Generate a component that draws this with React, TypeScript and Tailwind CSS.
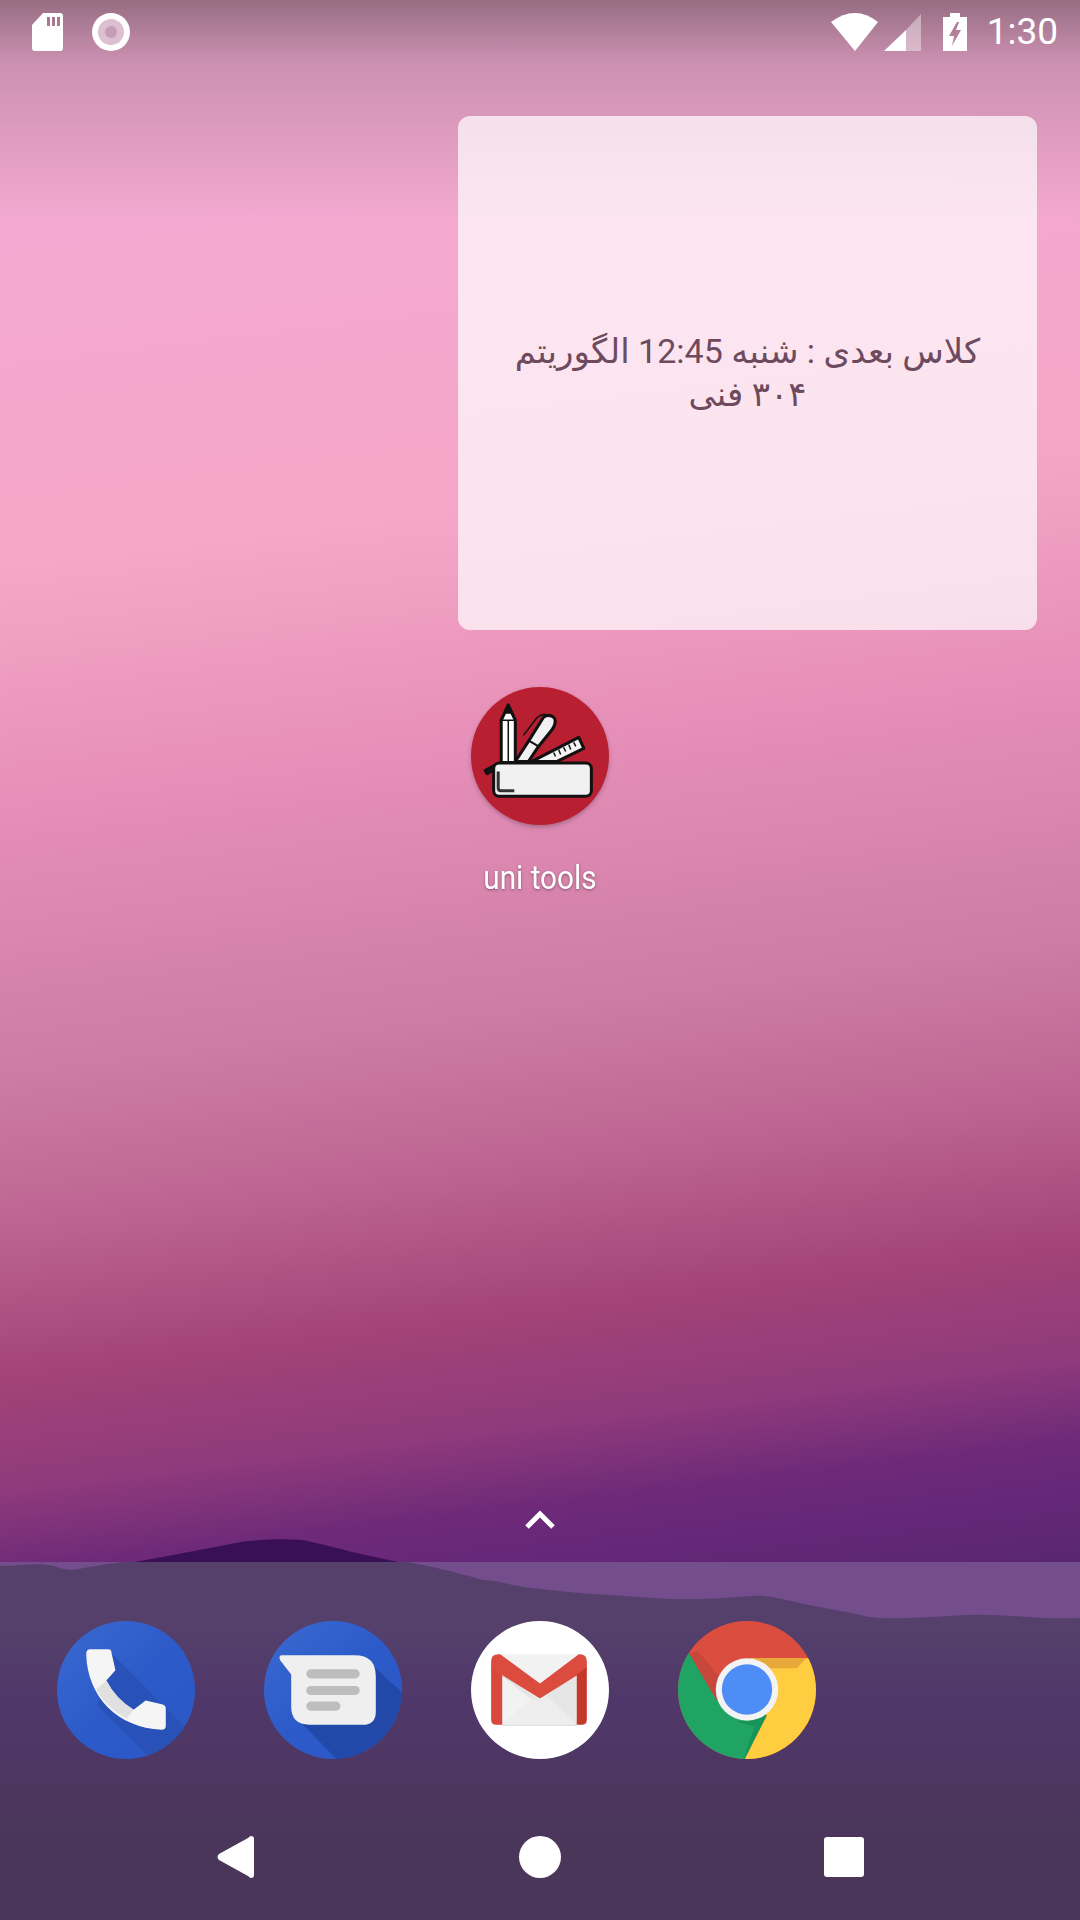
import React from "react";

function StatusLeft() {
  return (
    <div className="flex items-center gap-[29px]">
      <svg width="31" height="38" viewBox="0 0 31 38">
        <path fillRule="evenodd" fill="#fff" d="M11 0H28Q31 0 31 3V35Q31 38 28 38H3Q0 38 0 35V12ZM15 4V13H18V4ZM20 4V13H23V4ZM25 4V13H28V4Z" />
      </svg>
      <svg width="38" height="38" viewBox="0 0 38 38">
        <circle cx="19" cy="19" r="19" fill="#fff" />
        <circle cx="19" cy="19" r="13" fill="#dcbfd0" />
        <circle cx="19" cy="19" r="6" fill="#c79cb6" />
      </svg>
    </div>
  );
}

function StatusRight() {
  return (
    <div className="flex items-center">
      <svg width="48" height="38" viewBox="0 0 48 38" className="mr-[5px]">
        <path fill="#fff" d="M0 9Q24 -9 47 9L24 38Z" />
      </svg>
      <svg width="37" height="38" viewBox="0 0 37 38" className="mr-[22px]">
        <path fill="#fff" fillOpacity="0.4" d="M37 1V38H22V17Z" />
        <path fill="#fff" d="M22 17V38H0Z" />
      </svg>
      <svg width="24" height="38" viewBox="0 0 24 38" className="mr-[20px]">
        <path fillRule="evenodd" fill="#fff" d="M7 0H17V4H24V38H0V4H7ZM14 9L6 23H11L9 33L18 17H13L16 9Z" />
      </svg>
      <span className="text-[37px] leading-none text-white font-['Roboto',sans-serif]">1:30</span>
    </div>
  );
}

function PhoneIcon() {
  return (
    <svg width="138" height="138" viewBox="0 0 137 137">
      <defs>
        <clipPath id="pc"><circle cx="68.5" cy="68.5" r="68.5" /></clipPath>
        <linearGradient id="pg" x1="0" y1="0" x2="1" y2="1">
          <stop offset="0" stopColor="#3c69d0" />
          <stop offset="0.5" stopColor="#2c5bc9" />
          <stop offset="1" stopColor="#2a58c6" />
        </linearGradient>
      </defs>
      <circle cx="68.5" cy="68.5" r="68.5" fill="url(#pg)" />
      <g clipPath="url(#pc)">
        <path fill="#2852b8" d="M55 33L137 115V137H93L40 84Z" />
      </g>
      <path fill="#f5f5f5" d="M29 33Q29 28 33 28H51Q54 28 54 31L58 49L49 59Q58 77 76 88L88 79L105 83Q108 84 108 87V104Q108 108 104 108C60 106 30 75 29 33Z" />
      <path fill="#e0e0e0" d="M49 59Q58 77 76 88L69 97Q50 87 39 68Z" />
    </svg>
  );
}

function MessagesIcon() {
  return (
    <svg width="138" height="138" viewBox="0 0 137 137">
      <defs>
        <clipPath id="mc"><circle cx="68.5" cy="68.5" r="68.5" /></clipPath>
        <linearGradient id="mg" x1="0" y1="0" x2="1" y2="1">
          <stop offset="0" stopColor="#3c69d0" />
          <stop offset="0.5" stopColor="#2c5bc9" />
          <stop offset="1" stopColor="#2a58c6" />
        </linearGradient>
      </defs>
      <circle cx="68.5" cy="68.5" r="68.5" fill="url(#mg)" />
      <g clipPath="url(#mc)">
        <path fill="#2249a9" d="M100 37L137 71V137H72L33 97Z" />
      </g>
      <path fill="#efefef" d="M18 34H90Q111 34 111 55V90Q111 103 98 103H45Q27 103 27 85V53L16 39Q14 34 18 34Z" />
      <rect x="42" y="48" width="53" height="9" rx="4.5" fill="#bdbdbd" />
      <rect x="42" y="64.500" width="53" height="9" rx="4.5" fill="#bdbdbd" />
      <rect x="42" y="80" width="34" height="9" rx="4.5" fill="#bdbdbd" />
    </svg>
  );
}

function GmailIcon() {
  return (
    <svg width="138" height="138" viewBox="0 0 137 137">
      <circle cx="68.500" cy="68.500" r="68.500" fill="#fff" />
      <path fill="#f2f2f2" d="M26 33H110V103H26Z" />
      <path fill="#e4e4e4" d="M31 50L68.500 80L105 50V62L68 84L31 55Z" />
      <path fill="#e6e6e6" d="M31 53L68.500 80L105 53V103Z" />
      <path fill="#eeeeee" d="M31 103L60 76L68.500 80L77 76L105 103Z" />
      <path fill="#d6d6d6" d="M31 103H105V104H31Z" />
      <path fill="#db4c3f" d="M20 40Q20 33 27 33H29L68.500 62L107 33H108Q115 33 115 40V48L68.500 77L20 47Z" />
      <path fill="#d9483c" d="M20 46L31 53V103H25Q20 103 20 98Z" />
      <path fill="#c5392a" d="M115 46L105 53V103H110Q115 103 115 98Z" />
    </svg>
  );
}

function ChromeIcon() {
  return (
    <svg width="138" height="138" viewBox="0 0 137 137">
      <defs>
        <clipPath id="cc"><circle cx="68.5" cy="68.5" r="68.5" /></clipPath>
      </defs>
      <g clipPath="url(#cc)">
        <rect width="137" height="137" fill="#db4d3f" />
        <path fill="#1fa463" d="M-8 0L11 32L38 78L88 94L65 140H-8Z" />
        <path fill="#ffcd40" d="M140 37H72L88 94L65 140H140Z" />
        <path fill="#e8a93a" d="M72 37H127L118 47H85Z" />
        <path fill="#168d54" fillOpacity="0.7" d="M58 100L88 94L65 137L76 105Z" />
        <path fill="#b9443a" fillOpacity="0.6" d="M11 32L38 78L45 60L20 30Z" />
      </g>
      <circle cx="68.5" cy="68" r="31" fill="#f3f3f3" />
      <circle cx="68.5" cy="68" r="25" fill="#4e8df5" />
    </svg>
  );
}

function UniToolsIcon() {
  return (
    <svg width="138" height="138" viewBox="0 0 137 137" className="drop-shadow-[0_2px_2px_rgba(0,0,0,0.25)]">
      <circle cx="68.500" cy="68.500" r="68.500" fill="#b81f30" />
      <g stroke="#111" strokeWidth="3" strokeLinejoin="round">
        <path fill="#fff" d="M30 33V75H44V33L37 18Z" />
        <path fill="#111" d="M34 25L37 18L40 25Z" />
        <path fill="none" strokeWidth="1.500" d="M30 33H44M37 33V74" />
        <path fill="#f1f1f1" d="M44 74L57 54L72 30Q78 26 83 31Q85 36 80 43L67 59L57 74Z" />
        <path fill="none" strokeWidth="1.500" d="M52 48L65 31Q69 27 74 27" />
        <path fill="none" strokeWidth="2" d="M57 53L67 59" />
        <path fill="#f4f4f4" d="M60 74L107 50L112 61L85 74Z" />
        <path fill="none" strokeWidth="1.500" d="M102 55L104 59M97 57L99 62M92 60L94 64M87 62L89 67M82 65L84 69" />
        <path fill="#222" d="M14 83L23 78L23 82L16 86Z" />
        <rect x="22.500" y="75.500" width="97" height="33" rx="5.500" fill="#f1f1f1" />
        <path fill="none" stroke="#333" d="M27 84V100Q27 103 30 103H43" />
      </g>
    </svg>
  );
}

export default function App() {
  return (
    <div className="relative h-[1920px] w-[1080px] overflow-hidden bg-[linear-gradient(173deg,#f3a9d1_230px,#f6a6c8_560px,#e68fb8_800px,#cd7ca5_1066px,#bd6592_1216px,#a34377_1366px,#8f3a7c_1480px,#6e2a78_1560px,#66277a_1611px,#57266f_1691px)]">
      {/* top scrim of the status bar */}
      <div className="absolute inset-x-0 top-0 h-[220px] bg-[linear-gradient(180deg,rgba(40,40,40,0.46),rgba(40,40,40,0.33)_30px,rgba(40,40,40,0.2)_60px,rgba(40,40,40,0.12)_118px,rgba(40,40,40,0))]" />
      {/* wallpaper hills */}
      <svg className="absolute left-0 top-[1520px]" width="1080" height="60" viewBox="0 1520 1080 60">
        <path fill="#3a1055" d="M124 1564Q190 1552 241 1542Q270 1538 303 1540Q330 1546 352 1552L407 1564Z" />
      </svg>
      <div className="relative flex h-full flex-col">
        <div className="flex h-[63px] shrink-0 items-center justify-between pl-[32px] pr-[22px]">
          <StatusLeft />
          <StatusRight />
        </div>

        <div className="ml-[458px] mt-[53px] flex h-[514px] w-[579px] flex-col justify-center rounded-[12px] bg-white/70 text-center text-[34px] leading-[43px] text-[#6d4a5e] font-['Roboto','DejaVu_Sans',sans-serif]" dir="rtl">
          <span>کلاس بعدی : شنبه 12:45 الگوریتم</span>
          <span>۳۰۴ فنی</span>
        </div>

        <div className="ml-[436px] mt-[57px] flex w-[208px] flex-col items-center">
          <UniToolsIcon />
          <span className="mt-[33px] scale-x-90 text-[33px] leading-[40px] text-white [text-shadow:0_1px_3px_rgba(0,0,0,0.4)] font-['Roboto',sans-serif]">uni tools</span>
        </div>

        <div className="mt-auto flex justify-center pb-[32px]">
          <svg width="32" height="20" viewBox="0 0 32 20">
            <path d="M3 17L16 4L29 17" fill="none" stroke="#fff" strokeWidth="5" />
          </svg>
        </div>

        <div className="relative h-[358px] shrink-0 bg-[#52386b]">
          <svg className="absolute inset-0" width="1080" height="358" viewBox="0 1562 1080 358">
            <rect x="0" y="1562" width="1080" height="358" fill="#54406b" />
            <path fill="#734d8c" d="M407 1562L1080 1562V1618C1040 1620 1000 1613 966 1615C930 1617 890 1620 869 1617C840 1610 820 1608 800 1603C785 1600 770 1595 752 1596C720 1598 690 1601 655 1598C610 1595 565 1593 524 1587C505 1584 495 1580 483 1580C455 1572 430 1566 407 1562Z" />
            <path fill="#734d8c" d="M0 1566C20 1566 35 1563 48 1565C58 1566 62 1570 72 1570C90 1567 105 1564 124 1562H0Z" />
          </svg>
          <div className="absolute inset-x-0 bottom-0 h-[290px] bg-[linear-gradient(180deg,rgba(82,56,107,0),#50376a_25%,#4a3659_75%)]" />
          <div className="relative flex pl-[22px] pt-[59px]">
            <div className="flex w-[207px] justify-center"><PhoneIcon /></div>
            <div className="flex w-[207px] justify-center"><MessagesIcon /></div>
            <div className="flex w-[207px] justify-center"><GmailIcon /></div>
            <div className="flex w-[207px] justify-center"><ChromeIcon /></div>
          </div>
          <div className="relative mt-[77px] flex items-center">
            <div className="ml-[217px] h-[42px] w-[37px]">
              <svg width="37" height="42" viewBox="0 0 37 42">
                <path fill="#fff" d="M34 0Q37 0 37 3V39Q37 42 34 42Q33 42 31 40L2 24Q-1 21 2 18L31 2Q33 0 34 0Z" />
              </svg>
            </div>
            <div className="ml-[265px] h-[42px] w-[42px] rounded-full bg-white" />
            <div className="ml-[263px] h-[40px] w-[40px] rounded-[3px] bg-white" />
          </div>
        </div>
      </div>
    </div>
  );
}
